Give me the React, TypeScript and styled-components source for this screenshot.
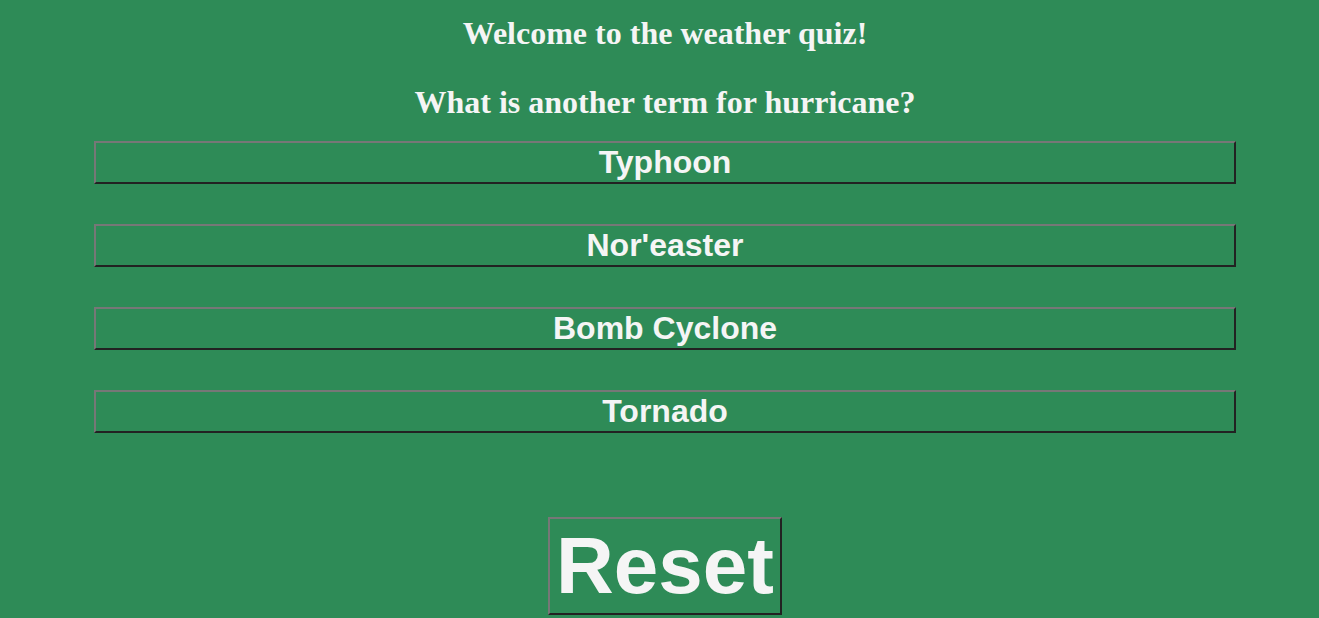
import React from "react";
import styled, { createGlobalStyle } from "styled-components";

const Global = createGlobalStyle`
  html, body { margin: 0; padding: 0; background: #2e8b57; }
  body { min-height: 618px; }
`;

const Page = styled.div`
  display: flex;
  flex-direction: column;
  align-items: center;
  padding: 15px 8px 0 19px;
  color: #f5f5f5;
`;

const Heading = styled.h2<{ $after: number }>`
  margin: 0 0 ${(p) => p.$after}px;
  font-family: "Liberation Serif", "Times New Roman", serif;
  font-weight: bold;
  font-size: 32px;
  line-height: 37px;
  text-align: center;
`;

const Options = styled.div`
  display: flex;
  flex-direction: column;
  gap: 40px;
  width: 1142px;
`;

const Button = styled.button<{ $size: number }>`
  box-sizing: border-box;
  margin: 0;
  padding: 1px 6px;
  background: #2e8b57;
  color: #f5f5f5;
  font-family: "Liberation Sans", Arial, sans-serif;
  font-weight: bold;
  font-size: ${(p) => p.$size}px;
  border: 2px solid;
  border-color: #777777 #222222 #222222 #777777;
  cursor: pointer;
`;

const OptionButton = styled(Button)`
  width: 100%;
  height: 43px;
  line-height: 37px;
`;

const ResetButton = styled(Button)`
  margin-top: 84px;
  height: 98px;
  line-height: 92px;
`;

const answers = ["Typhoon", "Nor'easter", "Bomb Cyclone", "Tornado"];

export default function App() {
  return (
    <>
      <Global />
      <Page>
        <Heading $after={32}>Welcome to the weather quiz!</Heading>
        <Heading $after={20}>What is another term for hurricane?</Heading>
        <Options>
          {answers.map((a) => (
            <OptionButton key={a} $size={32}>
              {a}
            </OptionButton>
          ))}
        </Options>
        <ResetButton $size={80}>Reset</ResetButton>
      </Page>
    </>
  );
}
